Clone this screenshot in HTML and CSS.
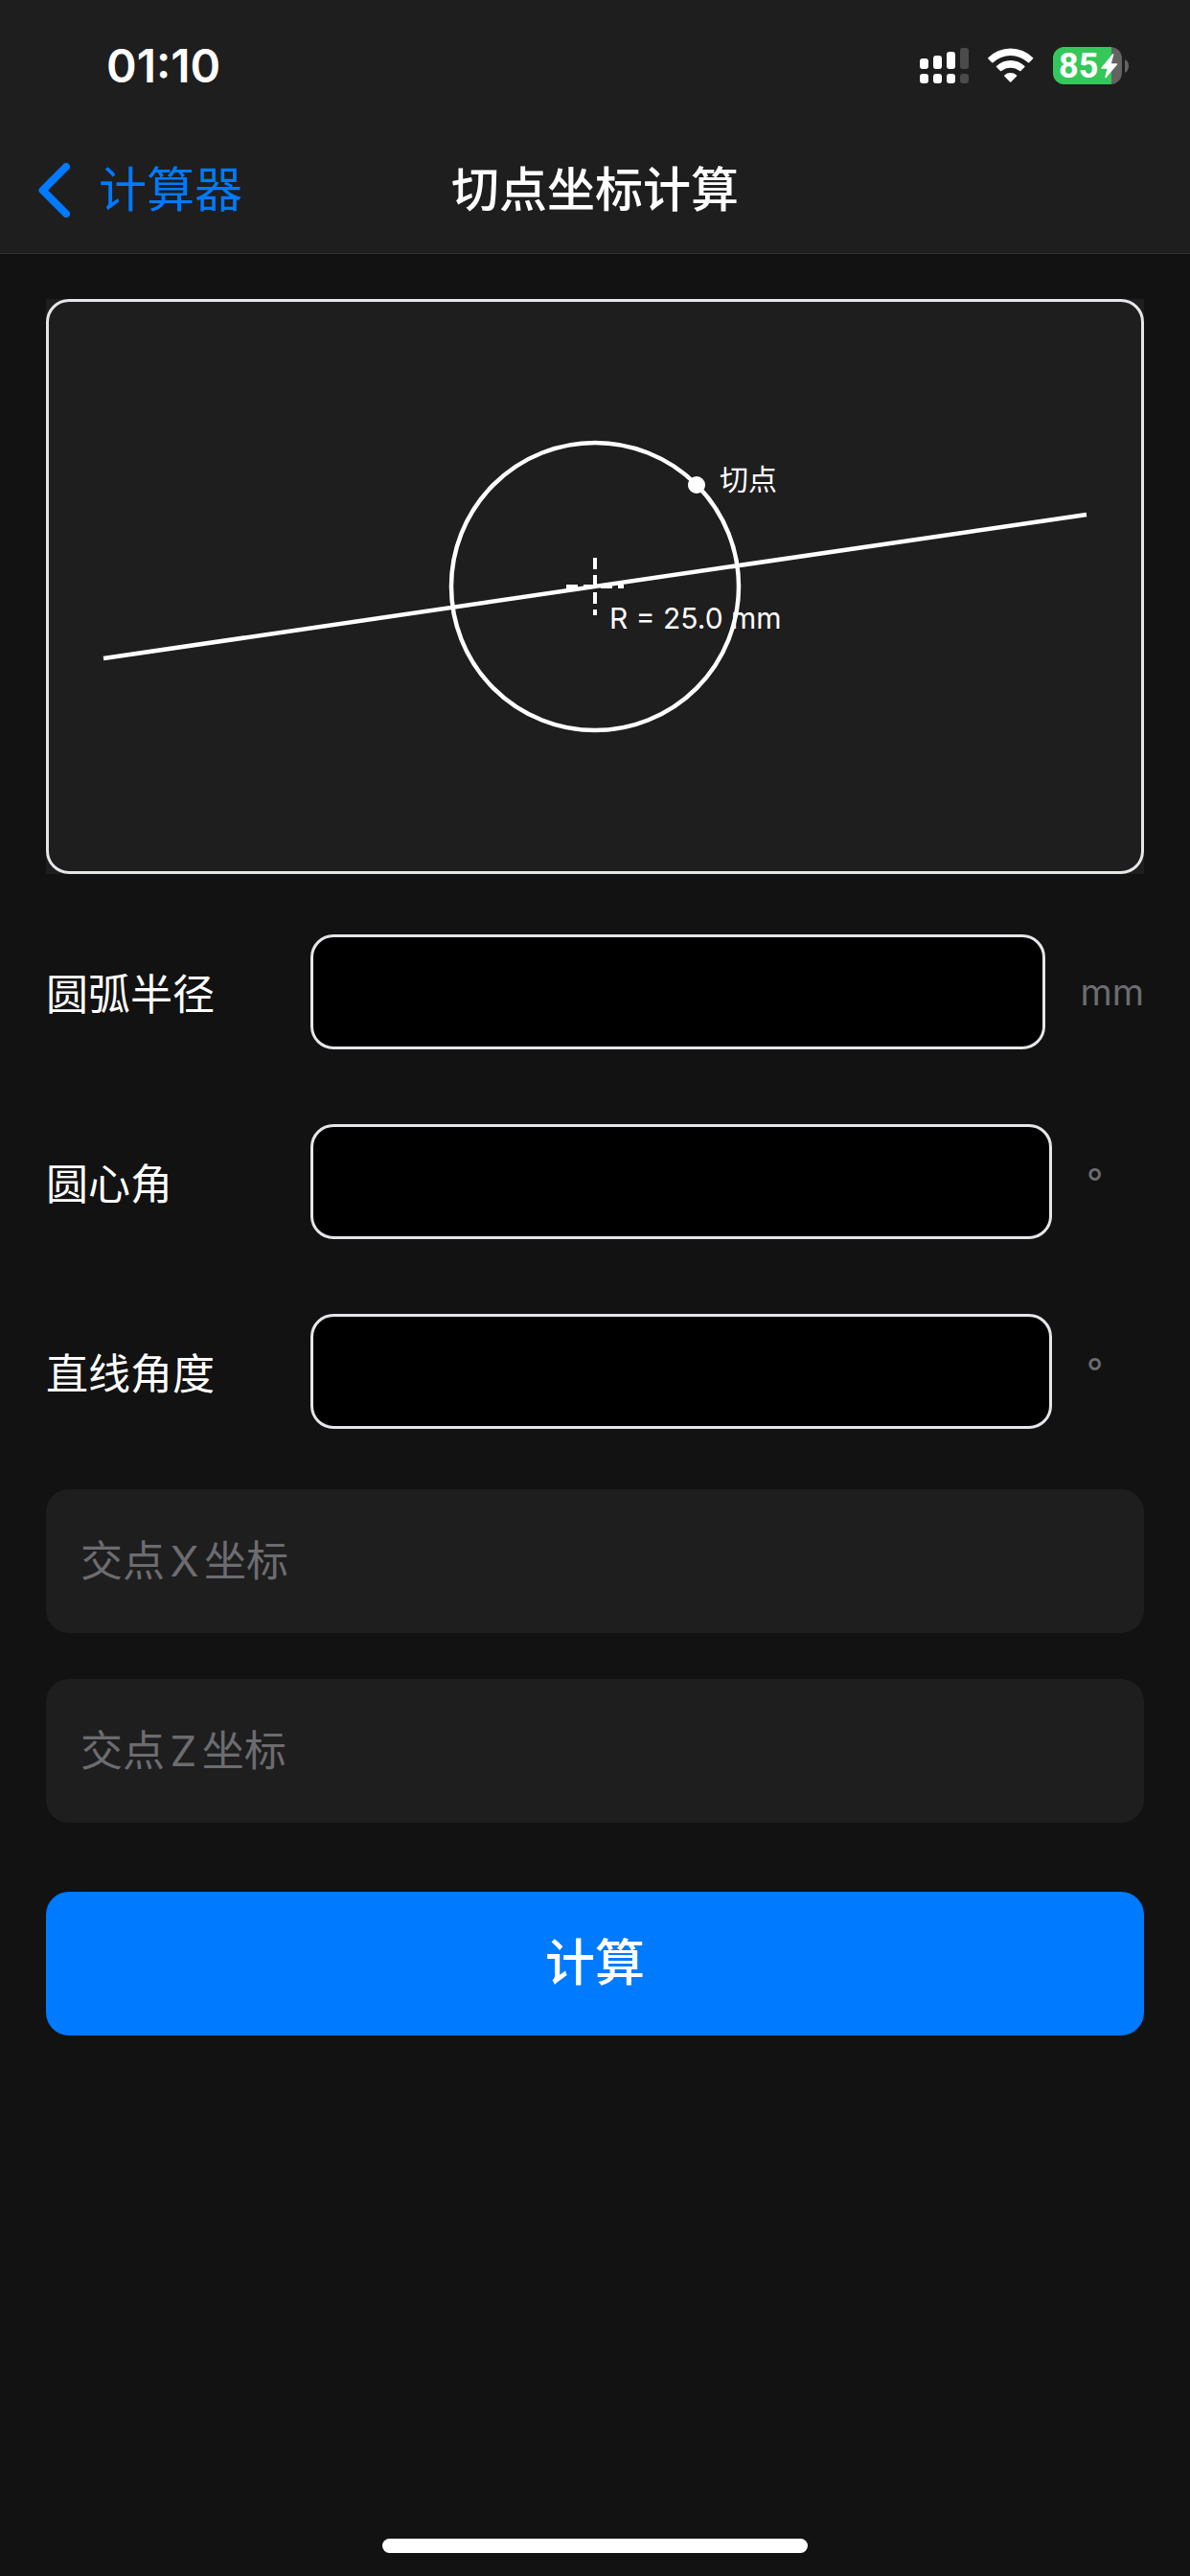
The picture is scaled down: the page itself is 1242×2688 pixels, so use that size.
FILE: index.html
```html
<!DOCTYPE html>
<html lang="zh-CN">

<head>
  <meta charset="UTF-8" />
  <meta name="viewport" content="width=device-width, initial-scale=1" />
  <title>切点坐标计算</title>
  <link rel="stylesheet" href="styles.css">
</head>

<body>
  <header class="header">
    <div class="status-bar">
      <span class="time">01:10</span>
      <div class="status-icons">
        <svg class="signal" width="51" height="38" viewBox="0 0 51 38" fill="#fff" aria-hidden="true">
          <rect x="0" y="12" width="9" height="11" rx="3" />
          <rect x="14" y="9" width="9" height="14" rx="3" />
          <rect x="28" y="5" width="9" height="18" rx="3" />
          <rect x="42" y="1" width="9" height="22" rx="3" fill="#4b4b4b" />
          <rect x="0" y="28" width="9" height="10" rx="3" />
          <rect x="14" y="28" width="9" height="10" rx="3" />
          <rect x="28" y="28" width="9" height="10" rx="3" />
          <rect x="42" y="28" width="9" height="10" rx="3" fill="#4b4b4b" />
        </svg>
        <svg class="wifi" width="48" height="36" viewBox="0 0 48 36" fill="#fff" aria-hidden="true">
          <path d="M.3 10.3A33 33 0 0 1 47.1 10.3Q47.6 10.8 47.1 11.3L43.2 15.2Q42.6 15.7 42 15.2A27 27 0 0 0 5.4 15.2Q4.8 15.7 4.2 15.2L.3 11.3Q-.2 10.8 .3 10.3Z" />
          <path d="M9 18.9A21 21 0 0 1 38.4 18.9Q39 19.5 38.4 20L34.4 24Q33.8 24.6 33.2 24.1A15 15 0 0 0 14.2 24.1Q13.6 24.6 13 24L9 20Q8.4 19.5 9 18.9Z" />
          <path d="M17.3 28.4A9.5 9.5 0 0 1 30.1 28.4Q30.7 29 30.1 29.6L24.3 35.5Q23.7 36 23.1 35.5L17.3 29.6Q16.7 29 17.3 28.4Z" />
        </svg>
        <svg class="battery" width="80" height="39" viewBox="0 0 80 39" role="img" aria-label="85%">
          <clipPath id="batteryBody">
            <rect width="72" height="39" rx="12" />
          </clipPath>
          <g clip-path="url(#batteryBody)">
            <rect width="72" height="39" fill="#636363" />
            <rect width="61" height="39" fill="#34c759" />
          </g>
          <path d="M75 13Q79 15 79 20T75 27Z" fill="#636363" />
          <text class="battery-level" x="6" y="32">85</text>
          <path d="M62.5 7L50.5 21.5Q49.8 22.7 51 22.7H56.5L54.3 31.5Q54.6 32.6 55.5 32L67 18.5Q67.6 17.3 66.4 17.2H60.9L63.3 8Q63.4 6.8 62.5 7Z" fill="#fff" />
        </svg>
      </div>
    </div>
    <nav class="nav-bar">
      <a class="back" href="#">
        <svg width="33" height="57" viewBox="0 0 33 57" fill="none" stroke="#007aff" stroke-width="8"
          stroke-linecap="round" stroke-linejoin="round" aria-hidden="true">
          <path d="M29 4L4.500 28.500L29 53" />
        </svg>
        <span>计算器</span>
      </a>
      <h1 class="title">切点坐标计算</h1>
    </nav>
  </header>

  <main class="content">
    <div class="diagram">
      <!-- origin is the centre of the arc -->
      <svg viewBox="-570 -297 1140 594" fill="none" stroke="#fff" stroke-width="4.5">
        <circle r="150" />
        <line x1="-513" y1="75" x2="513" y2="-75" />
        <path d="M-30 0H30M0 -30V30" stroke-width="4" stroke-dasharray="12 6" />
        <circle cx="106" cy="-106" r="9" fill="#fff" stroke="none" />
        <text class="diagram-text" x="130" y="-101">切点</text>
        <text class="diagram-text" x="15" y="44">R = 25.0 mm</text>
      </svg>
    </div>

    <form class="form">
      <div class="field">
        <label for="radius">圆弧半径</label>
        <input type="text" id="radius" inputmode="decimal" />
        <span class="unit">mm</span>
      </div>
      <div class="field">
        <label for="centralAngle">圆心角</label>
        <input type="text" id="centralAngle" inputmode="decimal" />
        <span class="unit">°</span>
      </div>
      <div class="field">
        <label for="lineAngle">直线角度</label>
        <input type="text" id="lineAngle" inputmode="decimal" />
        <span class="unit">°</span>
      </div>
      <input class="coord" type="text" inputmode="decimal" placeholder="交点X坐标" aria-label="交点X坐标" />
      <input class="coord" type="text" inputmode="decimal" placeholder="交点Z坐标" aria-label="交点Z坐标" />
      <button class="calc-btn" type="button">计算</button>
    </form>
  </main>

  <div class="home-indicator"></div>
</body>

</html>
```
FILE: styles.css
```css
* {
  box-sizing: border-box;
}

body {
  display: flex;
  flex-direction: column;
  min-height: 100vh;
  margin: 0;
  background-color: #121212;
  color: #fff;
  font-family: Inter, "Noto Sans CJK SC", sans-serif;
  text-autospace: normal;
}

.header {
  background-color: #1e1e1e;
  box-shadow: 0 1px 0 #333;
}

.status-bar {
  display: flex;
  justify-content: space-between;
  align-items: center;
  height: 132px;
  padding: 4px 63px 0 111px;
}

.time {
  font-size: 48px;
  font-weight: 600;
}

.status-icons {
  display: flex;
  align-items: center;
  gap: 20px;
}

.battery {
  overflow: visible;
}

.battery-level {
  fill: #fff;
  font-family: Roboto, sans-serif;
  font-size: 36px;
  font-weight: 700;
}

.nav-bar {
  display: grid;
  grid-template-columns: 1fr auto 1fr;
  align-items: center;
  height: 132px;
  padding: 0 40px;
}

.back {
  display: flex;
  align-items: center;
  gap: 30px;
  color: #007aff;
  font-size: 50px;
  line-height: 60px;
  text-decoration: none;
}

.title {
  margin: 0;
  font-size: 50px;
  font-weight: 500;
  line-height: 60px;
}

.content {
  flex: 1;
  padding: 48px;
}

.diagram {
  background-color: #1e1e1e;
}

.diagram svg {
  display: block;
  width: 100%;
  border: 3px solid #e5e5ea;
  border-radius: 24px;
}

.diagram-text {
  fill: #fff;
  stroke: none;
  font-size: 30px;
}

.form {
  display: flex;
  flex-direction: column;
  gap: 48px;
  margin-top: 48px;
}

.field {
  display: flex;
  align-items: center;
  gap: 36px;
  height: 150px;
}

.field label {
  width: 240px;
  font-size: 44px;
}

.field input {
  flex: 1;
  min-width: 0;
  height: 120px;
  padding: 0 36px;
  background-color: #000;
  border: 3px solid #e5e5ea;
  border-radius: 24px;
  color: #fff;
  font: inherit;
  font-size: 44px;
}

.unit {
  min-width: 60px;
  color: #6c6c70;
  font-size: 38px;
}

.coord {
  height: 150px;
  padding: 0 36px;
  background-color: #1e1e1e;
  border: none;
  border-radius: 24px;
  color: #fff;
  font: inherit;
  font-size: 44px;
}

.coord::placeholder {
  color: #6c6c70;
}

.calc-btn {
  height: 150px;
  margin-top: 24px;
  background-color: #007aff;
  border: none;
  border-radius: 24px;
  color: #fff;
  font: inherit;
  font-size: 52px;
  font-weight: 500;
  line-height: 60px;
  cursor: pointer;
}

.home-indicator {
  width: 444px;
  height: 15px;
  margin: 0 auto 24px;
  background-color: #fff;
  border-radius: 8px;
}
```
